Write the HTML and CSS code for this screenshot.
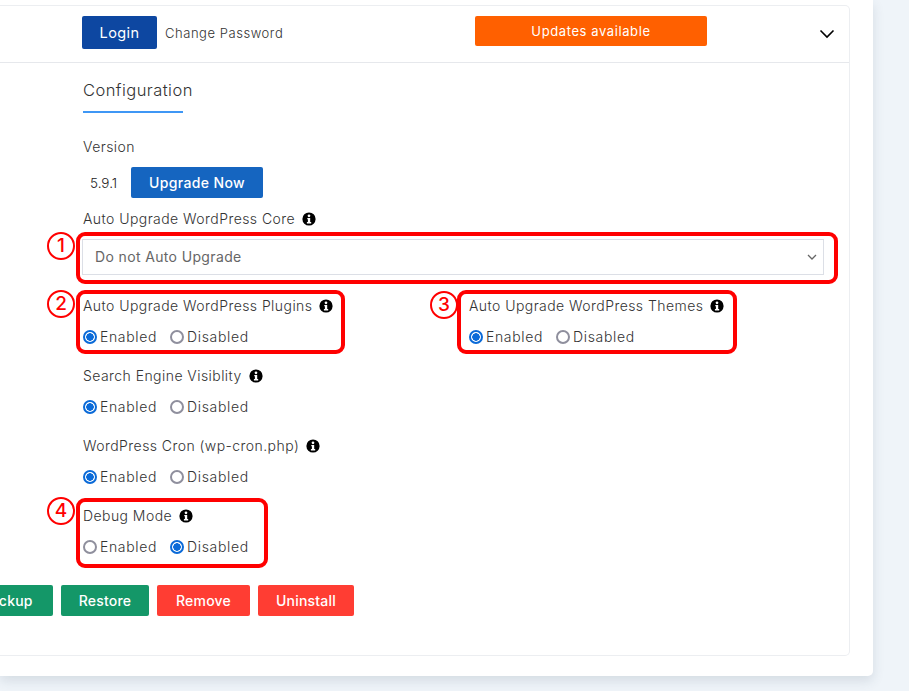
FILE: index.html
```html
<!DOCTYPE html>
<html lang="en">
<head>
<meta charset="utf-8">
<title>Configuration</title>
<link rel="stylesheet" href="styles.css">
</head>
<body>
<main class="panel">
  <section class="card">
    <header class="card-head">
      <div class="head-left">
        <a class="btn btn-login">Login</a>
        <a class="change-pass">Change Password</a>
      </div>
      <div class="updates">Updates available</div>
      <svg class="caret" width="16" height="10" viewBox="0 0 16 10"><path d="M1.5 1.5 8 8l6.5-6.5" fill="none" stroke="#000" stroke-width="1.6"/></svg>
    </header>
    <div class="card-body">
      <h2 class="title">Configuration</h2>
      <div class="label version-label">Version</div>
      <div class="version-row"><span class="version">5.9.1</span><a class="btn btn-upgrade">Upgrade Now</a></div>
      <div class="label core-label">Auto Upgrade WordPress Core <svg class="info" viewBox="0 0 14 14"><use href="#i"/></svg></div>
      <div class="select"><span>Do not Auto Upgrade</span><svg width="10" height="7" viewBox="0 0 10 7"><path d="M1 1l4 4 4-4" fill="none" stroke="#666" stroke-width="1.3"/></svg></div>
      <div class="two-col">
        <div class="field">
          <div class="label">Auto Upgrade WordPress Plugins <svg class="info" viewBox="0 0 14 14"><use href="#i"/></svg></div>
          <div class="radios"><label class="radio"><input type="radio" name="a" checked>Enabled</label><label class="radio"><input type="radio" name="a">Disabled</label></div>
        </div>
        <div class="field">
          <div class="label">Auto Upgrade WordPress Themes <svg class="info" viewBox="0 0 14 14"><use href="#i"/></svg></div>
          <div class="radios"><label class="radio"><input type="radio" name="b" checked>Enabled</label><label class="radio"><input type="radio" name="b">Disabled</label></div>
        </div>
      </div>
      <div class="field">
        <div class="label">Search Engine Visiblity <svg class="info" viewBox="0 0 14 14"><use href="#i"/></svg></div>
        <div class="radios"><label class="radio"><input type="radio" name="c" checked>Enabled</label><label class="radio"><input type="radio" name="c">Disabled</label></div>
      </div>
      <div class="field">
        <div class="label">WordPress Cron (wp-cron.php) <svg class="info" viewBox="0 0 14 14"><use href="#i"/></svg></div>
        <div class="radios"><label class="radio"><input type="radio" name="d" checked>Enabled</label><label class="radio"><input type="radio" name="d">Disabled</label></div>
      </div>
      <div class="field">
        <div class="label">Debug Mode <svg class="info" viewBox="0 0 14 14"><use href="#i"/></svg></div>
        <div class="radios"><label class="radio"><input type="radio" name="e">Enabled</label><label class="radio"><input type="radio" name="e" checked>Disabled</label></div>
      </div>
      <div class="actions">
        <a class="btn btn-green btn-backup">Backup</a>
        <a class="btn btn-green btn-restore">Restore</a>
        <a class="btn btn-red btn-remove">Remove</a>
        <a class="btn btn-red btn-uninstall">Uninstall</a>
      </div>
    </div>
  </section>
</main>

<div class="mark mark-1"></div>
<div class="mark mark-2"></div>
<div class="mark mark-3"></div>
<div class="mark mark-4"></div>
<div class="num num-1">1</div>
<div class="num num-2">2</div>
<div class="num num-3">3</div>
<div class="num num-4">4</div>

<svg class="defs" width="0" height="0">
  <symbol id="i" viewBox="0 0 14 14">
    <circle cx="7" cy="7" r="6.6" fill="#000"/>
    <circle cx="7" cy="3.8" r="1.35" fill="#fff"/>
    <path d="M5.3 6h2.9v4.1h1v1.3H4.9v-1.3h1V7.3h-.6z" fill="#fff"/>
  </symbol>
</svg>
</body>
</html>
```
FILE: styles.css
```css
* { box-sizing: border-box; }
html, body { margin: 0; height: 691px; overflow: hidden; }
body {
  position: relative;
  background: #eff4f9;
  color: #333;
  font-family: Inter, "Liberation Sans", sans-serif;
  font-weight: 300;
  font-size: 14px;
  letter-spacing: .44px;
}
.panel {
  width: 873px;
  height: 676px;
  padding-top: 5px;
  background: #fff;
  border-radius: 0 0 5px 0;
  box-shadow: 0 5px 12px rgba(60, 80, 100, .14);
}
.card {
  width: 850px;
  height: 651px;
  border: 1px solid #eceef1;
  border-left: 0;
  border-radius: 0 5px 5px 0;
}
.card-head {
  display: flex;
  align-items: flex-start;
  height: 57px;
  padding: 10px 14px 0 82px;
  border-bottom: 1px solid #e6e8ec;
}
.head-left { display: flex; align-items: center; width: 393px; }
.btn {
  display: flex;
  align-items: center;
  justify-content: center;
  color: #fff;
  font-weight: 500;
  border-radius: 2px;
  letter-spacing: .2px;
}
.btn-login { width: 75px; height: 33px; background: #0d47a1; font-size: 14.5px; font-weight: 400; letter-spacing: .4px; }
.change-pass { margin-left: 8px; font-size: 13px; letter-spacing: .55px; }
.updates {
  display: flex;
  align-items: center;
  justify-content: center;
  width: 232px;
  height: 30px;
  background: #ff6000;
  color: #fff;
  font-weight: 400;
  font-size: 13px;
  letter-spacing: .6px;
  border-radius: 2px;
}
.caret { margin: 13px 0 0 auto; }
.card-body { padding: 14px 0 0 82px; }
.title {
  width: 100px;
  height: 36px;
  margin: 0 0 22px 1px;
  padding: 0;
  font-size: 16.5px;
  font-weight: 300;
  line-height: 26px;
  white-space: nowrap;
  letter-spacing: .45px;
  border-bottom: 2px solid #3f97f5;
}
.label {
  display: flex;
  align-items: flex-start;
  gap: 7px;
  height: 24px;
  padding-left: 1px;
  line-height: 23px;
  white-space: nowrap;
}
.info { width: 14px; height: 14px; flex: none; margin-top: 5px; }
.version-label { margin-bottom: 8px; }
.version-row { display: flex; align-items: center; height: 31px; margin-bottom: 9px; }
.version { width: 49px; padding-left: 8px; font-size: 13.5px; color: #222; letter-spacing: 0; }
.btn-upgrade { width: 132px; height: 31px; background: #1565c0; font-size: 14px; letter-spacing: .35px; }
.core-label { margin-bottom: 8px; }
.select {
  display: flex;
  align-items: center;
  justify-content: space-between;
  width: 742px;
  height: 36px;
  margin-bottom: 19px;
  padding: 0 6px 0 12px;
  border: 1px solid #dcdfe6;
  color: #666;
  font-weight: 400;
  letter-spacing: .36px;
}
.select span { margin-bottom: 2px; }
.two-col { display: grid; grid-template-columns: 386px 1fr; }
.field { height: 70px; }
.radios { display: flex; gap: 13px; height: 24px; margin-top: 7px; padding-left: 1px; }
.radio { display: flex; align-items: center; gap: 3px; height: 22px; letter-spacing: .65px; }
.radio input {
  appearance: none;
  width: 14px;
  height: 14px;
  margin: 2px 0 0;
  border: 2px solid #8f8f9d;
  border-radius: 50%;
  background: #fff;
}
.radio input:checked {
  border-color: #0a6ad8;
  background: radial-gradient(circle, #0a6ad8 0 3.5px, #fff 4px);
}
.actions { display: flex; gap: 8px; margin: 11px 0 0 -121px; }
.btn-green { background: #149768; }
.btn-red { background: #ff3d33; }
.actions .btn { height: 31px; font-size: 14px; }
.btn-backup { width: 92px; }
.btn-restore { width: 88px; }
.btn-remove { width: 93px; }
.btn-uninstall { width: 96px; }

.mark { position: absolute; border: 4px solid #f00; border-radius: 9px; }
.mark-1 { left: 76px; top: 232px; width: 762px; height: 52px; }
.mark-2 { left: 76px; top: 290px; width: 269px; height: 64px; }
.mark-3 { left: 457px; top: 290px; width: 280px; height: 64px; }
.mark-4 { left: 76px; top: 498px; width: 192px; height: 70px; }
.num {
  position: absolute;
  width: 28px;
  height: 28px;
  border: 2px solid #f00;
  border-radius: 50%;
  background: #fff;
  color: #f00;
  font-size: 19px;
  font-weight: 500;
  line-height: 24px;
  text-align: center;
  letter-spacing: 0;
}
.num-1 { left: 47px; top: 232px; }
.num-2 { left: 47px; top: 290px; }
.num-3 { left: 430px; top: 291px; }
.num-4 { left: 47px; top: 497px; }
.defs { position: absolute; }
```
